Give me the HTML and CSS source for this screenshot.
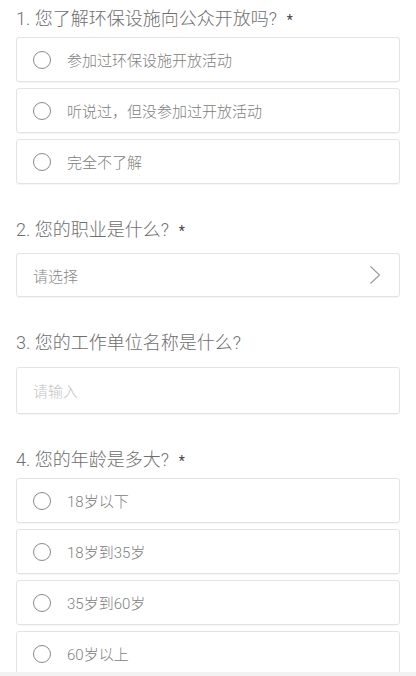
FILE: index.html
```html
<!DOCTYPE html>
<html lang="zh">
<head>
<meta charset="utf-8">
<link rel="stylesheet" href="styles.css">
</head>
<body>
<div class="form">
  <section class="q q-first">
    <div class="q-title">1. 您了解环保设施向公众开放吗?<span class="req">*</span></div>
    <div class="options">
      <div class="opt"><span class="radio"></span><span class="opt-text">参加过环保设施开放活动</span></div>
      <div class="opt"><span class="radio"></span><span class="opt-text">听说过，但没参加过开放活动</span></div>
      <div class="opt"><span class="radio"></span><span class="opt-text">完全不了解</span></div>
    </div>
  </section>
  <section class="q">
    <div class="q-title">2. 您的职业是什么?<span class="req">*</span></div>
    <div class="field select">
      <span class="select-text">请选择</span>
      <svg class="chev" width="12" height="20" viewBox="0 0 12 20"><path d="M1.5 1.5 L10.5 10 L1.5 18.5" fill="none" stroke="#9a9a9a" stroke-width="1.1"/></svg>
    </div>
  </section>
  <section class="q">
    <div class="q-title">3. 您的工作单位名称是什么?</div>
    <div class="field input"><span class="placeholder">请输入</span></div>
  </section>
  <section class="q">
    <div class="q-title">4. 您的年龄是多大?<span class="req">*</span></div>
    <div class="options">
      <div class="opt"><span class="radio"></span><span class="opt-text">18岁以下</span></div>
      <div class="opt"><span class="radio"></span><span class="opt-text">18岁到35岁</span></div>
      <div class="opt"><span class="radio"></span><span class="opt-text">35岁到60岁</span></div>
      <div class="opt"><span class="radio"></span><span class="opt-text">60岁以上</span></div>
    </div>
  </section>
</div>
<div class="bottom-bar"></div>
</body>
</html>
```
FILE: styles.css
```css
html, body {
  margin: 0;
  padding: 0;
  background: #ffffff;
}
body {
  font-family: "Roboto", "Noto Sans CJK SC", sans-serif;
  font-weight: 300;
  overflow: hidden;
}
.form {
  padding: 7px 16px 0 16px;
}
.q {
  margin-top: 34px;
}
.q-first {
  margin-top: 0;
}
.q-title {
  height: 24px;
  line-height: 24px;
  font-size: 18px;
  color: #6e6e6e;
  display: flex;
  align-items: center;
  white-space: nowrap;
}
.req {
  color: #444444;
  font-size: 14px;
  font-weight: 400;
  margin-left: 10px;
  position: relative;
  top: 1px;
}
.options {
  margin-top: 6px;
  display: flex;
  flex-direction: column;
  gap: 6px;
}
.opt {
  height: 45px;
  box-sizing: border-box;
  border: 1px solid #e3e3e3;
  border-radius: 3px;
  box-shadow: 0 1px 1px rgba(0,0,0,0.04);
  display: flex;
  align-items: center;
  padding-left: 16px;
}
.radio {
  width: 18px;
  height: 18px;
  box-sizing: border-box;
  border: 1.3px solid #8a8a8a;
  border-radius: 50%;
  flex: none;
}
.opt-text {
  margin-left: 16px;
  font-size: 15px;
  color: #808080;
}
.field {
  box-sizing: border-box;
  border: 1px solid #e3e3e3;
  border-radius: 3px;
  box-shadow: 0 1px 1px rgba(0,0,0,0.04);
  display: flex;
  align-items: center;
  padding: 0 16px;
}
.select {
  margin-top: 11px;
  height: 44px;
  justify-content: space-between;
  padding-right: 18px;
}
.select-text {
  font-size: 15px;
  color: #888888;
}
.chev {
  display: block;
}
.input {
  margin-top: 12px;
  height: 47px;
}
.placeholder {
  font-size: 15px;
  color: #c4c4c4;
}
.bottom-bar {
  position: fixed;
  left: 0;
  right: 0;
  bottom: 0;
  height: 4px;
  background: #f2f2f2;
}
```
